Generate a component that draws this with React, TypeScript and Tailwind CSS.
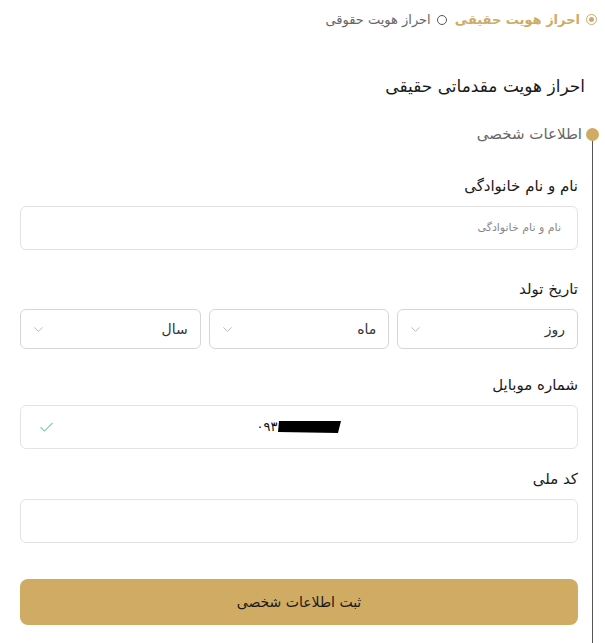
import { Check, ChevronDown } from "lucide-react"

const font = { fontFamily: "'DejaVu Sans', 'Noto Sans', sans-serif" }

const SelectBox = ({ label }: { label: string }) => {
  return (
    <div className="flex-1 h-[40px] rounded-[6px] border border-[#d6d6d6] bg-white flex items-center justify-between pr-[12px] pl-[10px]">
      <span className="text-[14px] text-[#333]">{label}</span>
      <ChevronDown size={15} strokeWidth={1.5} className="text-[#b5b5b5]" />
    </div>
  )
}

const Label = ({ text }: { text: string }) => (
  <div className="text-[15px] text-[#1a1a1a] mb-[10px] leading-[20px]">{text}</div>
)

export default function App() {
  return (
    <div dir="rtl" className="w-[605px] h-[643px] overflow-hidden bg-white" style={font}>
      {/* top radios */}
      <div className="flex items-center gap-[8px] pr-[8px] pt-[10px] h-[29px]">
        <div className="flex items-center gap-[6px]">
          <span className="w-[11px] h-[11px] rounded-full border-[1.5px] border-[#cfab63] flex items-center justify-center">
            <span className="w-[5px] h-[5px] rounded-full bg-[#cfab63]" />
          </span>
          <span className="text-[13px] font-bold text-[#cfab63]">احراز هویت حقیقی</span>
        </div>
        <div className="flex items-center gap-[6px]">
          <span className="w-[10px] h-[10px] rounded-full border-[1.5px] border-[#555]" />
          <span className="text-[13px] text-[#666]">احراز هویت حقوقی</span>
        </div>
      </div>

      <h1 className="mt-[45px] pr-[20px] text-[17px] text-[#1a1a1a] leading-[24px]">
        احراز هویت مقدماتی حقیقی
      </h1>

      <div className="flex mt-[30px]">
        {/* stepper rail */}
        <div className="w-[13px] mr-[6px] flex flex-col items-center">
          <span className="w-[13px] h-[13px] rounded-full bg-[#cfab63] shrink-0" />
          <span className="w-px flex-1 bg-[#555]" />
        </div>

        <div className="flex-1 pl-[20px]">
          <div className="mr-[4px] text-[15px] text-[#666] leading-[13px]">اطلاعات شخصی</div>

          <div className="mr-[8px] mt-[35px]">
            <Label text="نام و نام خانوادگی" />
            <div className="h-[44px] rounded-[6px] border border-[#e3e3e3] flex items-center pr-[16px]">
              <span className="text-[11px] text-[#888]">نام و نام خانوادگی</span>
            </div>

            <div className="mt-[29px]">
              <Label text="تاریخ تولد" />
              <div className="flex gap-[8px]">
                <SelectBox label="روز" />
                <SelectBox label="ماه" />
                <SelectBox label="سال" />
              </div>
            </div>

            <div className="mt-[26px]">
              <Label text="شماره موبایل" />
              <div className="h-[44px] rounded-[6px] border border-[#e3e3e3] flex items-center pl-[10px] relative">
                <div dir="ltr" className="absolute inset-0 flex items-center justify-center">
                  <span className="text-[13px] text-[#111]">۰۹۳</span>
                  <svg width="64" height="14" viewBox="0 0 64 14">
                    <path d="M2 1 L64 1 L61 13 L1 12 Z" fill="#000" />
                  </svg>
                </div>
                <div className="flex-1" />
                <Check size={17} strokeWidth={1.5} className="text-[#7fcdb5] ml-[7px]" />
              </div>
            </div>

            <div className="mt-[20px]">
              <Label text="کد ملی" />
              <div className="h-[44px] rounded-[6px] border border-[#e3e3e3]" />
            </div>

            <button className="mt-[36px] w-full h-[46px] rounded-[8px] bg-[#cfab63] text-[14px] text-[#1a1a1a]">
              ثبت اطلاعات شخصی
            </button>
            <div className="h-[20px]" />
          </div>
        </div>
      </div>
    </div>
  )
}
